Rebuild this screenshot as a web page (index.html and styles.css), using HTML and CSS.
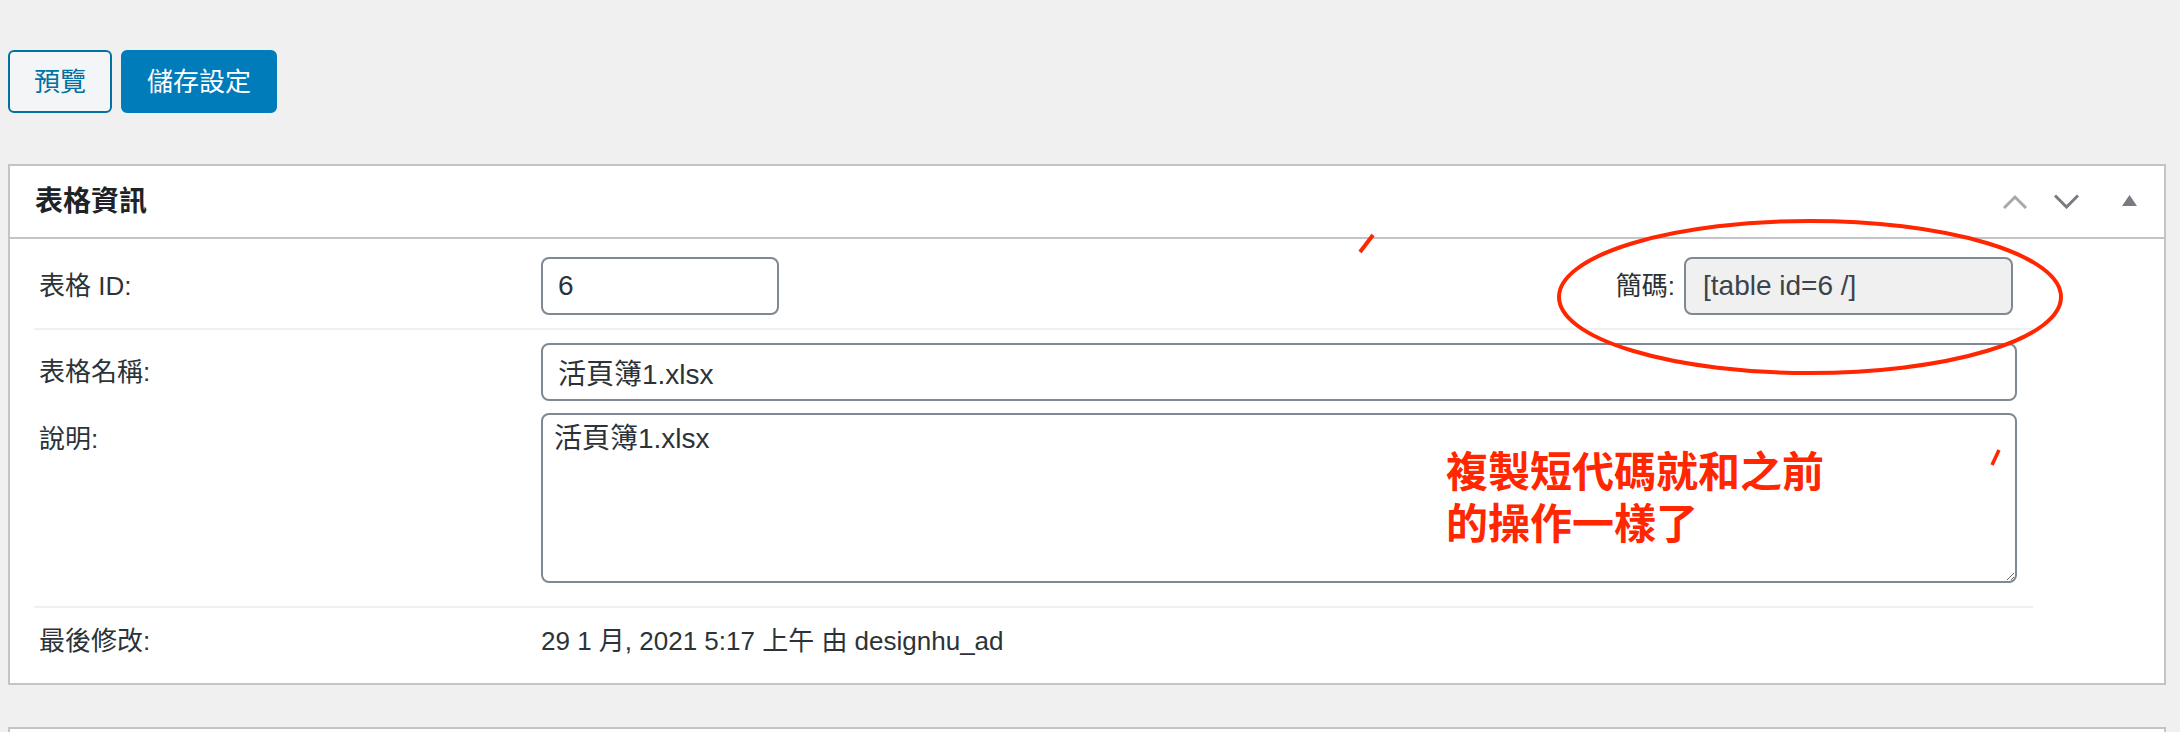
FILE: index.html
```html
<!DOCTYPE html>
<html lang="zh-Hant">
<head>
<meta charset="utf-8">
<title>表格資訊</title>
<link rel="stylesheet" href="styles.css">
</head>
<body>
<div class="page">
  <div class="actions">
    <button class="btn btn-secondary" type="button">預覽</button>
    <button class="btn btn-primary" type="button">儲存設定</button>
  </div>

  <div class="postbox">
    <div class="postbox-header">
      <h2 class="hndle">表格資訊</h2>
      <div class="handle-actions">
        <svg class="ico ico-up" width="26" height="15" viewBox="0 0 26 15"><path d="M2 14 L13 3 L24 14" fill="none" stroke="#a7aaad" stroke-width="3"/></svg>
        <svg class="ico ico-down" width="27" height="15" viewBox="0 0 27 15"><path d="M2 1.5 L13.5 13 L25 1.5" fill="none" stroke="#787c82" stroke-width="3"/></svg>
        <svg class="ico ico-toggle" width="15" height="11" viewBox="0 0 15 11"><path d="M7.5 0 L15 11 L0 11 Z" fill="#787c82"/></svg>
      </div>
    </div>
    <div class="inside">
      <div class="row row-id">
        <div class="label">表格 ID:</div>
        <input class="field field-id" type="text" value="6" readonly>
        <div class="shortcode">
          <span class="label-inline">簡碼:</span>
          <input class="field field-sc" type="text" value="[table id=6 /]" readonly>
        </div>
      </div>
      <div class="row row-name">
        <div class="label">表格名稱:</div>
        <input class="field field-wide" type="text" value="活頁簿1.xlsx">
      </div>
      <div class="row row-desc">
        <div class="label label-top">說明:</div>
        <textarea class="field field-area">活頁簿1.xlsx</textarea>
      </div>
      <div class="row row-mod">
        <div class="label">最後修改:</div>
        <div class="value">29 1 月, 2021 5:17 上午 由 designhu_ad</div>
      </div>
    </div>
  </div>

  <div class="postbox postbox-next"></div>

  <svg class="annot" width="2180" height="732" viewBox="0 0 2180 732">
    <ellipse cx="1810" cy="297" rx="251" ry="76" fill="none" stroke="#ff2600" stroke-width="4"/>
    <path d="M1373 235 L1360 252" stroke="#ff2600" stroke-width="4" fill="none"/>
    <path d="M1999 450 L1992 465" stroke="#ff2600" stroke-width="3.5" fill="none"/>
  </svg>
  <div class="note">複製短代碼就和之前<br>的操作一樣了</div>
</div>
</body>
</html>
```
FILE: styles.css
```css
* { box-sizing: border-box; }

html, body {
  margin: 0;
  padding: 0;
  background: #f0f0f1;
}

body {
  font-family: "Liberation Sans", "Noto Sans CJK TC", sans-serif;
  color: #2c3338;
}

.page {
  position: relative;
  width: 2180px;
  height: 732px;
  overflow: hidden;
  padding: 50px 14px 0 8px;
}

.actions {
  display: flex;
  gap: 9px;
  margin-bottom: 51px;
}

.btn {
  height: 63px;
  padding: 0 24px;
  border-radius: 6px;
  font-family: "Liberation Sans", "Noto Sans CJK TC", sans-serif;
  font-size: 26px;
  line-height: 1;
  display: inline-flex;
  align-items: center;
  justify-content: center;
  cursor: pointer;
}

.btn-secondary {
  border: 2px solid #0071a1;
  background: #f3f5f6;
  color: #0071a1;
}

.btn-primary {
  border: 2px solid #007cba;
  background: #007cba;
  color: #ffffff;
}

.postbox {
  background: #ffffff;
  border: 2px solid #c3c4c7;
}

.postbox-header {
  height: 73px;
  border-bottom: 2px solid #c3c4c7;
  display: flex;
  align-items: center;
  justify-content: space-between;
  padding: 0 27px 0 25px;
}

.hndle {
  margin: 0;
  font-size: 28px;
  font-weight: 700;
  line-height: 1;
  color: #1d2327;
}

.handle-actions {
  display: flex;
  align-items: center;
}

.ico { display: block; }
.ico-up { margin-top: -1px; }
.ico-down { margin-left: 25px; margin-top: -1px; }
.ico-toggle { margin-left: 42px; margin-top: -2px; }

.inside {
  padding: 0 131px 0 24px;
}

.row {
  display: flex;
  align-items: center;
  padding-right: 16px;
}

.row-id {
  padding-top: 18px;
  padding-bottom: 13px;
  border-bottom: 2px solid #f0f0f1;
}

.row-name {
  padding-top: 13px;
  padding-bottom: 6px;
}

.row-desc {
  align-items: flex-start;
  padding-top: 6px;
  padding-bottom: 23px;
  border-bottom: 2px solid #f0f0f1;
}

.row-mod {
  padding-top: 18px;
  padding-bottom: 27px;
}

.label {
  flex: 0 0 507px;
  padding-left: 5px;
  font-size: 26px;
  line-height: 30px;
  color: #2c3338;
}

.label-top {
  margin-top: 11px;
}

.label-inline {
  font-size: 26px;
  line-height: 30px;
  color: #2c3338;
}

.value {
  font-size: 26px;
  line-height: 30px;
  color: #2c3338;
}

.field {
  font-family: "Liberation Sans", "Noto Sans CJK TC", sans-serif;
  font-size: 28px;
  color: #2c3338;
  background: #ffffff;
  border: 2px solid #7e8993;
  border-radius: 8px;
  height: 58px;
  padding: 0 15px;
  outline: none;
  margin: 0;
}

.field-id {
  width: 238px;
}

.shortcode {
  margin-left: auto;
  margin-right: 4px;
  display: flex;
  align-items: center;
  gap: 9px;
}

.field-sc {
  width: 329px;
  background: #f0f0f1;
  padding-left: 17px;
  color: #3c434a;
}

.field-wide {
  flex: 1 1 auto;
  min-width: 0;
}

.field-area {
  flex: 1 1 auto;
  height: 170px;
  padding: 4px 11px;
  line-height: 40px;
  resize: both;
  display: block;
}

.postbox-next {
  margin-top: 42px;
  height: 200px;
}

.annot {
  position: absolute;
  left: 0;
  top: 0;
  pointer-events: none;
}

.note {
  position: absolute;
  left: 1446px;
  top: 443px;
  font-family: "Noto Sans CJK TC", sans-serif;
  font-size: 42px;
  font-weight: 700;
  line-height: 52px;
  color: #ff2600;
  white-space: nowrap;
}
```
